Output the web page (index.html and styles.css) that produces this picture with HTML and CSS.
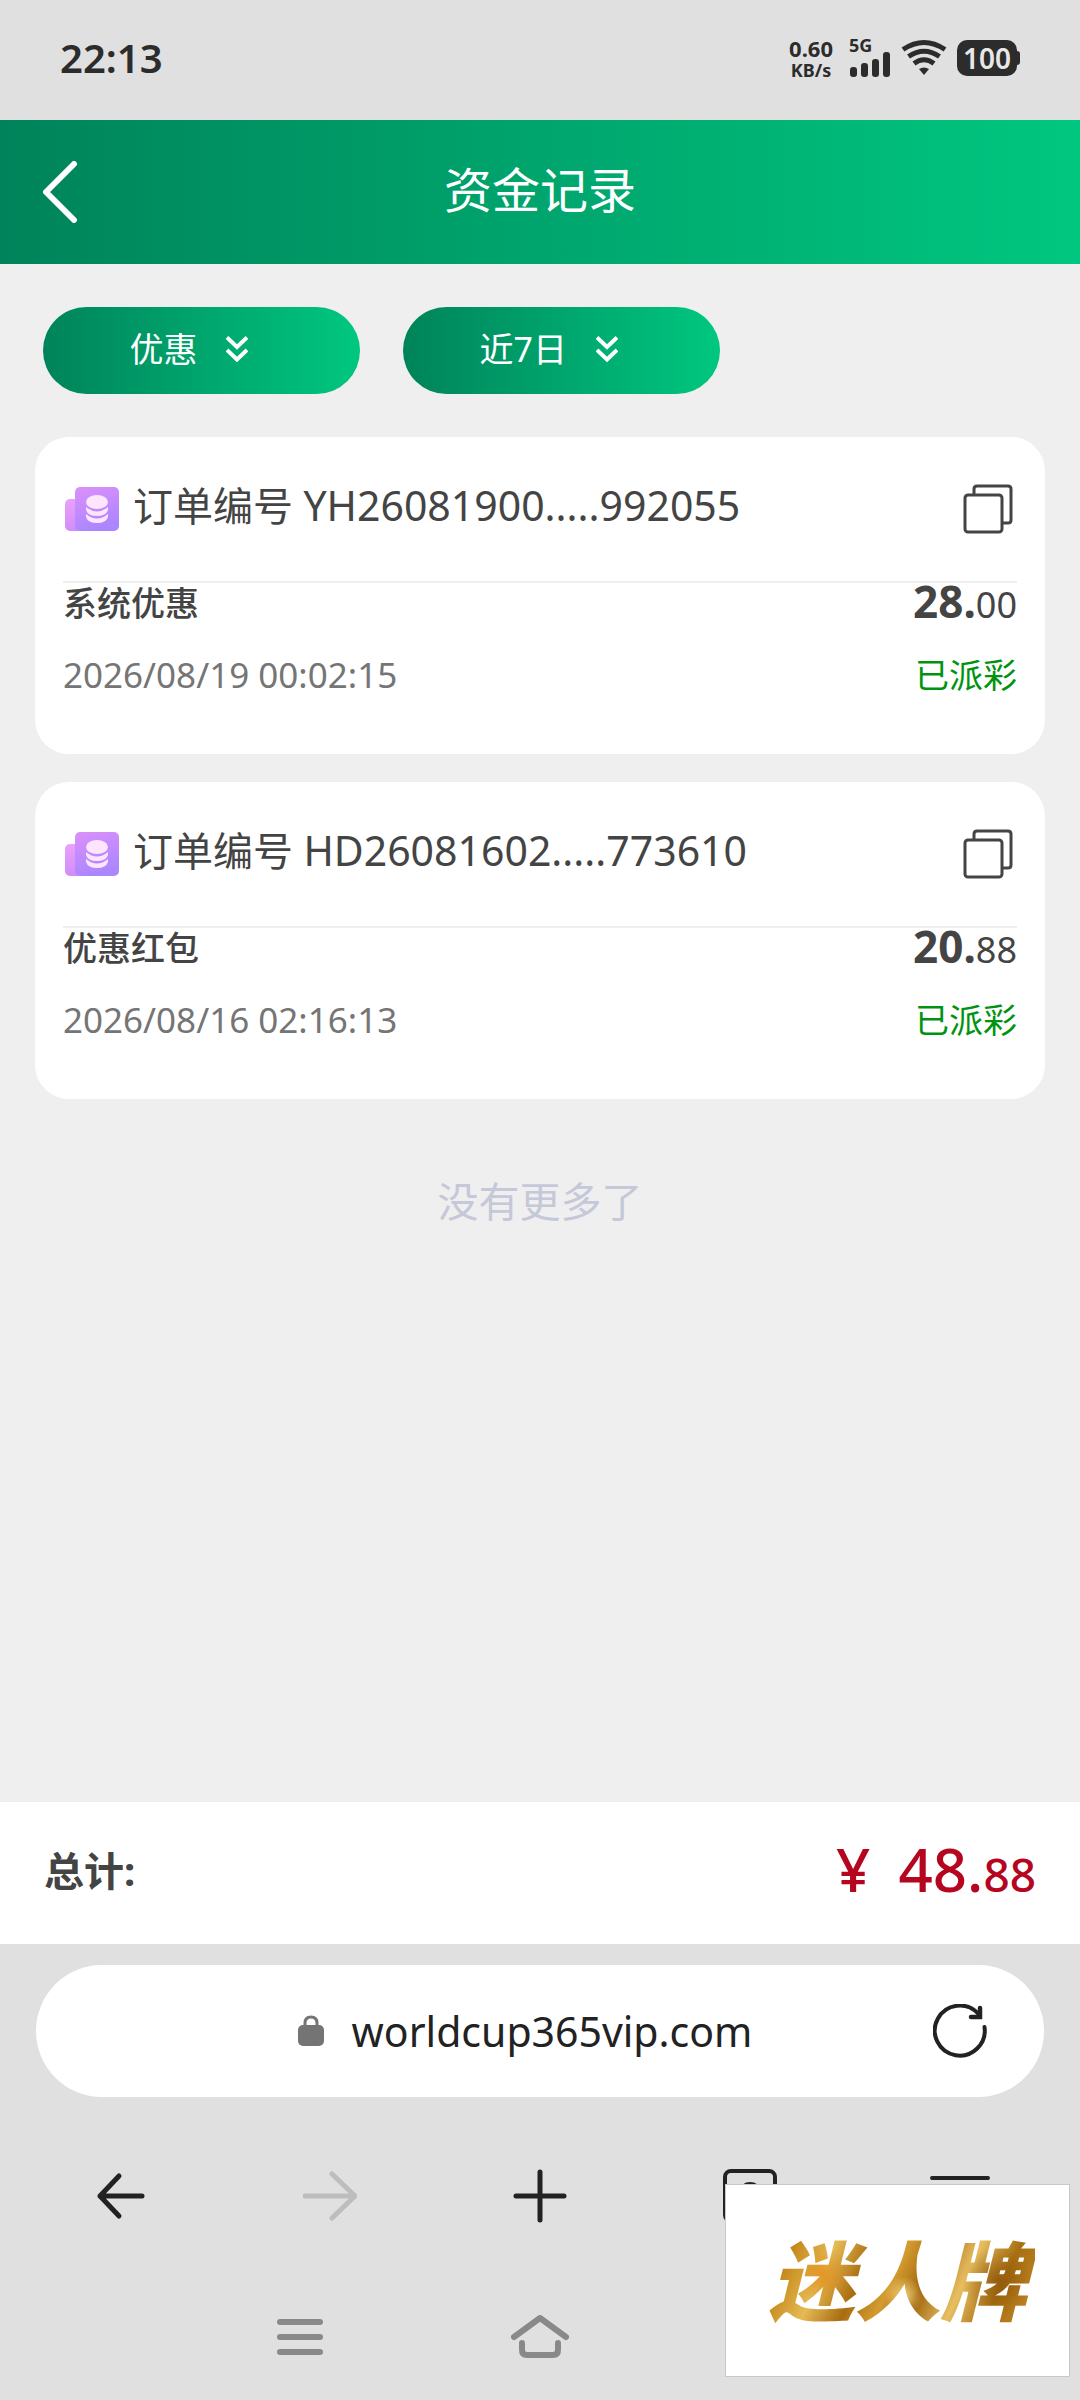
FILE: index.html
```html
<!DOCTYPE html>
<html lang="zh-CN">
<head>
    <meta charset="UTF-8">
    <meta name="viewport" content="width=device-width, initial-scale=1.0">
    <title>资金记录</title>
    <link rel="stylesheet" href="styles.css">
</head>
<body>
    <div class="status-bar">
        <span class="clock">22:13</span>
        <div class="status-icons">
            <div class="speed">
                <span class="speed-value">0.60</span>
                <span class="speed-unit">KB/s</span>
            </div>
            <div class="signal">
                <span class="network">5G</span>
                <svg width="42" height="26" viewBox="0 0 42 26" fill="#2c2c2c">
                    <rect x="1" y="16" width="7" height="10" rx="3"/>
                    <rect x="12" y="12" width="7" height="14" rx="3"/>
                    <rect x="23" y="8" width="7" height="18" rx="3"/>
                    <rect x="34" y="1" width="7" height="25" rx="3"/>
                </svg>
            </div>
            <svg class="wifi" width="46" height="38" viewBox="0 0 46 38" fill="none" stroke="#2c2c2c" stroke-width="5">
                <path d="M2 10.5Q23 -3.500 44 10.500"/>
                <path d="M7.500 17.500Q23 7 38.500 17.500"/>
                <path d="M13 24.500Q23 17 33 24.500"/>
                <path d="M18 30Q23 27 28 30L23 36Z" fill="#2c2c2c" stroke="none"/>
            </svg>
            <div class="battery">100</div>
        </div>
    </div>

    <header class="header">
        <button type="button" class="back" aria-label="返回">
            <svg width="36" height="62" viewBox="0 0 36 62" fill="none" stroke="#fff" stroke-width="6" stroke-linecap="round" stroke-linejoin="round">
                <path d="M32 3L4 31L32 59"/>
            </svg>
        </button>
        <h1>资金记录</h1>
    </header>

    <main class="main">
        <div class="filters">
            <label class="filter">
                <select name="type" aria-label="类型">
                    <option>优惠</option>
                </select>
                <svg width="22" height="26" viewBox="0 0 22 26" fill="none" stroke="#fff" stroke-width="4">
                    <path d="M1 1.500L11 11L21 1.500M1 14L11 23.500L21 14"/>
                </svg>
            </label>
            <label class="filter">
                <select name="period" aria-label="时间">
                    <option>近7日</option>
                </select>
                <svg width="22" height="26" viewBox="0 0 22 26" fill="none" stroke="#fff" stroke-width="4">
                    <path d="M1 1.500L11 11L21 1.500M1 14L11 23.500L21 14"/>
                </svg>
            </label>
        </div>

        <div class="records">
            <div class="card">
                <div class="card-head">
                    <svg width="54" height="44" viewBox="0 0 54 44">
                        <defs>
                            <linearGradient id="folder" x1="0" y1="0" x2="0.3" y2="1">
                                <stop offset="0" stop-color="#dc90fb"/>
                                <stop offset="1" stop-color="#ac86ff"/>
                            </linearGradient>
                            <linearGradient id="folderTab" x1="0" y1="0" x2="0" y2="1">
                                <stop offset="0" stop-color="#e9a2fb"/>
                                <stop offset="1" stop-color="#d28cf8"/>
                            </linearGradient>
                        </defs>
                        <rect x="0" y="12" width="20" height="32" rx="5" fill="url(#folderTab)"/>
                        <rect x="10" y="0" width="44" height="44" rx="5" fill="url(#folder)"/>
                        <g fill="#fde6fd">
                            <ellipse cx="32" cy="15" rx="11" ry="7"/>
                            <path d="M21 20Q32 29 43 20V23Q41 29 32 29Q23 29 21 23Z"/>
                            <path d="M21 27Q32 36 43 27V30Q41 36 32 36Q23 36 21 30Z"/>
                        </g>
                    </svg>
                    <span class="order">订单编号 <span class="order-no">YH26081900.....992055</span></span>
                    <button type="button" class="copy" aria-label="复制">
                        <svg width="50" height="50" viewBox="0 0 50 50" fill="none" stroke="#444" stroke-width="3">
                            <path d="M11 11V5Q11 2 14 2H45Q48 2 48 5V36Q48 39 45 39H39"/>
                            <rect x="2" y="11" width="37" height="37" rx="3"/>
                        </svg>
                    </button>
                </div>
                <div class="row">
                    <span class="type">系统优惠</span>
                    <span class="amount"><b>28.</b>00</span>
                </div>
                <div class="row">
                    <span class="date">2026/08/19 00:02:15</span>
                    <span class="state">已派彩</span>
                </div>
            </div>

            <div class="card">
                <div class="card-head">
                    <svg width="54" height="44" viewBox="0 0 54 44">
                        <rect x="0" y="12" width="20" height="32" rx="5" fill="url(#folderTab)"/>
                        <rect x="10" y="0" width="44" height="44" rx="5" fill="url(#folder)"/>
                        <g fill="#fde6fd">
                            <ellipse cx="32" cy="15" rx="11" ry="7"/>
                            <path d="M21 20Q32 29 43 20V23Q41 29 32 29Q23 29 21 23Z"/>
                            <path d="M21 27Q32 36 43 27V30Q41 36 32 36Q23 36 21 30Z"/>
                        </g>
                    </svg>
                    <span class="order">订单编号 <span class="order-no">HD26081602.....773610</span></span>
                    <button type="button" class="copy" aria-label="复制">
                        <svg width="50" height="50" viewBox="0 0 50 50" fill="none" stroke="#444" stroke-width="3">
                            <path d="M11 11V5Q11 2 14 2H45Q48 2 48 5V36Q48 39 45 39H39"/>
                            <rect x="2" y="11" width="37" height="37" rx="3"/>
                        </svg>
                    </button>
                </div>
                <div class="row">
                    <span class="type">优惠红包</span>
                    <span class="amount"><b>20.</b>88</span>
                </div>
                <div class="row">
                    <span class="date">2026/08/16 02:16:13</span>
                    <span class="state">已派彩</span>
                </div>
            </div>
        </div>

        <p class="no-more">没有更多了</p>
    </main>

    <div class="total">
        <span class="total-label">总计:</span>
        <span class="total-sum"><span class="currency">¥</span>48.<small>88</small></span>
    </div>

    <div class="browser">
        <div class="address">
            <div class="address-text">
                <svg width="26" height="32" viewBox="0 0 26 32">
                    <path d="M7 12V8Q7 2 13 2Q19 2 19 8V12" fill="none" stroke="#747474" stroke-width="3"/>
                    <rect x="0" y="10" width="26" height="21" rx="5" fill="#747474"/>
                </svg>
                <span>worldcup365vip.com</span>
            </div>
            <button type="button" class="reload" aria-label="刷新">
                <svg width="54" height="54" viewBox="0 0 54 54" fill="none" stroke="#222" stroke-width="4" stroke-linecap="round">
                    <path d="M51.500 23A25 25 0 1 1 45 9.500L47 13"/>
                    <path d="M47 4V13H38" stroke-width="4.500"/>
                </svg>
            </button>
        </div>

        <div class="toolbar">
            <button type="button" aria-label="后退">
                <svg width="54" height="54" viewBox="0 0 54 54" fill="none" stroke="#222" stroke-width="5" stroke-linecap="round" stroke-linejoin="round">
                    <path d="M49 27H7M26 7L7 27L26 47"/>
                </svg>
            </button>
            <button type="button" aria-label="前进" disabled>
                <svg width="54" height="54" viewBox="0 0 54 54" fill="none" stroke="#bdbdbd" stroke-width="5" stroke-linecap="round" stroke-linejoin="round">
                    <path d="M2 27H52M29 5L52 27L29 49"/>
                </svg>
            </button>
            <button type="button" aria-label="新建标签">
                <svg width="54" height="54" viewBox="0 0 54 54" fill="none" stroke="#222" stroke-width="5" stroke-linecap="round">
                    <path d="M3 27H51M27 3V51"/>
                </svg>
            </button>
            <button type="button" aria-label="标签页">
                <svg width="54" height="54" viewBox="0 0 54 54" fill="none" stroke="#222" stroke-width="4">
                    <rect x="2" y="2" width="50" height="50" rx="6"/>
                    <path d="M19 22Q20 15 27 15Q34 15 34 21Q34 25 20 37H35"/>
                </svg>
            </button>
            <button type="button" aria-label="菜单">
                <svg width="60" height="40" viewBox="0 0 60 40" fill="none" stroke="#222" stroke-width="4" stroke-linecap="round">
                    <path d="M2 2H58M2 20H58M2 38H58"/>
                </svg>
            </button>
        </div>

        <div class="system-nav">
            <button type="button" aria-label="最近任务">
                <svg width="60" height="44" viewBox="0 0 60 44" fill="none" stroke="#898989" stroke-width="6" stroke-linecap="round">
                    <path d="M10 7H50M10 22H50M10 37H50"/>
                </svg>
            </button>
            <button type="button" aria-label="主屏幕">
                <svg width="60" height="44" viewBox="0 0 60 44" fill="none" stroke="#898989" stroke-width="6" stroke-linecap="round" stroke-linejoin="round">
                    <path d="M4 22L30 3L56 22M12 28V35Q12 40 17 40H43Q48 40 48 35V28"/>
                </svg>
            </button>
            <button type="button" aria-label="返回">
                <svg width="60" height="44" viewBox="0 0 60 44" fill="none" stroke="#898989" stroke-width="6" stroke-linejoin="round">
                    <path d="M42 4L16 22L42 40Z"/>
                </svg>
            </button>
        </div>
    </div>

    <div class="watermark"><span>迷人牌</span></div>
</body>
</html>
```
FILE: styles.css
```css
* {
    margin: 0;
    padding: 0;
    box-sizing: border-box;
}

body {
    position: relative;
    display: flex;
    flex-direction: column;
    min-height: 100vh;
    background: #efefef;
    color: #444;
    font-family: 'Noto Sans', 'Noto Sans CJK SC', sans-serif;
}

button {
    display: flex;
    align-items: center;
    justify-content: center;
    background: none;
    border: none;
    cursor: pointer;
}

svg {
    display: block;
    flex-shrink: 0;
}

/* status bar */
.status-bar {
    display: flex;
    justify-content: space-between;
    align-items: center;
    height: 120px;
    padding: 0 60px 4px;
    background: #e0e0e0;
    color: #2c2c2c;
}

.clock {
    font-size: 40px;
    line-height: 48px;
    font-weight: 600;
}

.status-icons {
    display: flex;
    align-items: center;
    gap: 10px;
}

.speed {
    display: flex;
    flex-direction: column;
    align-items: center;
    margin-right: 6px;
    font-weight: 700;
}

.speed-value {
    font-size: 22px;
    line-height: 24px;
}

.speed-unit {
    font-size: 18px;
    line-height: 20px;
    font-weight: 700;
}

.network {
    display: block;
    font-size: 18px;
    line-height: 12px;
    font-weight: 700;
}

.battery {
    position: relative;
    width: 60px;
    margin-right: 3px;
    border-radius: 10px;
    background: #2c2c2c;
    color: #e8e8e8;
    font-size: 28px;
    line-height: 36px;
    font-weight: 600;
    text-align: center;
}

.battery::after {
    content: '';
    position: absolute;
    top: 11px;
    right: -3px;
    width: 4px;
    height: 14px;
    border-radius: 0 3px 3px 0;
    background: #2c2c2c;
}

/* header */
.header {
    display: grid;
    grid-template-columns: 120px 1fr 120px;
    align-items: center;
    height: 144px;
    background: linear-gradient(90deg, #00835a, #00c780);
}

.back {
    justify-content: flex-start;
    height: 100%;
    padding-left: 42px;
}

h1 {
    padding-bottom: 4px;
    color: #fff;
    font-size: 48px;
    line-height: 72px;
    font-weight: 400;
    text-align: center;
}

/* list */
.main {
    flex: 1;
}

.filters {
    display: flex;
    gap: 43px;
    padding: 43px;
}

.filter {
    display: flex;
    align-items: center;
    justify-content: center;
    gap: 28px;
    width: 317px;
    height: 87px;
    padding: 0 26px 3px 0;
    border-radius: 44px;
    background: linear-gradient(90deg, #00835a, #00c780);
    cursor: pointer;
}

.filter select {
    appearance: none;
    border: none;
    outline: none;
    background: none;
    color: #fff;
    font-family: inherit;
    font-size: 34px;
    line-height: 48px;
}

.records {
    display: flex;
    flex-direction: column;
    gap: 28px;
    padding: 0 35px;
}

.card {
    padding: 0 28px 43px;
    border-radius: 34px;
    background: #fff;
}

.card-head {
    display: flex;
    align-items: center;
    height: 146px;
    padding: 0 4px 0 2px;
    border-bottom: 2px solid #efefef;
}

.order {
    flex: 1;
    padding: 0 0 8px 14px;
    font-size: 40px;
    line-height: 56px;
}

.order-no {
    font-size: 41px;
}

.row {
    display: flex;
    justify-content: space-between;
    align-items: center;
    height: 72px;
}

.card-head + .row {
    height: 40px;
    margin-bottom: 16px;
}

.type {
    font-size: 34px;
    line-height: 44px;
    font-weight: 500;
}

.amount {
    font-size: 36px;
    line-height: 44px;
}

.amount b {
    font-size: 44px;
}

.date {
    color: #757575;
    font-size: 35px;
    line-height: 48px;
}

.state {
    color: #009310;
    font-size: 34px;
    line-height: 48px;
}

.no-more {
    padding: 72px 0;
    color: #c5c8d8;
    font-size: 41px;
    line-height: 60px;
    text-align: center;
}

/* total */
.total {
    display: flex;
    justify-content: space-between;
    align-items: center;
    height: 142px;
    padding: 0 44px 4px;
    background: #fff;
}

.total-label {
    font-size: 40px;
    line-height: 60px;
    font-weight: 700;
}

.total-sum {
    color: #b5051f;
    font-size: 60px;
    line-height: 80px;
    font-weight: 500;
}

.currency {
    margin-right: 28px;
}

.total-sum small {
    font-size: 46px;
}

/* browser */
.browser {
    padding-bottom: 22px;
    background: #e0e0e0;
}

.address {
    display: flex;
    align-items: center;
    height: 132px;
    margin: 21px 36px 0;
    padding: 0 57px;
    border-radius: 66px;
    background: #fff;
}

.address-text {
    display: flex;
    flex: 1;
    align-items: center;
    justify-content: center;
    gap: 28px;
    padding-left: 24px;
    color: #222;
    font-size: 41px;
    line-height: 60px;
}

.toolbar {
    display: flex;
    height: 198px;
    padding: 0 15px;
}

.toolbar button {
    flex: 1;
}

.system-nav {
    display: flex;
    justify-content: center;
    height: 83px;
}

.system-nav button {
    width: 240px;
}

/* watermark over the page corner */
.watermark {
    position: absolute;
    right: 10px;
    bottom: 23px;
    display: flex;
    align-items: center;
    justify-content: center;
    width: 345px;
    height: 193px;
    border: 1px solid #c8c8c8;
    background: #fff;
}

.watermark span {
    padding: 0 8px;
    background:
        radial-gradient(circle at 22% 45%, rgba(226, 140, 25, 0.8), transparent 12%),
        radial-gradient(circle at 52% 62%, rgba(255, 225, 140, 0.8), transparent 12%),
        radial-gradient(circle at 86% 50%, rgba(130, 75, 5, 0.6), transparent 14%),
        linear-gradient(115deg, #a0660c 0%, #c58a1c 14%, #e6ba55 26%, #a86c10 38%, #d49c30 48%, #a0660e 58%, #e8bf60 70%, #a86e12 82%, #c8902c 100%);
    background-clip: text;
    -webkit-background-clip: text;
    color: transparent;
    font-size: 86px;
    line-height: 120px;
    font-weight: 900;
    font-style: italic;
}
```
